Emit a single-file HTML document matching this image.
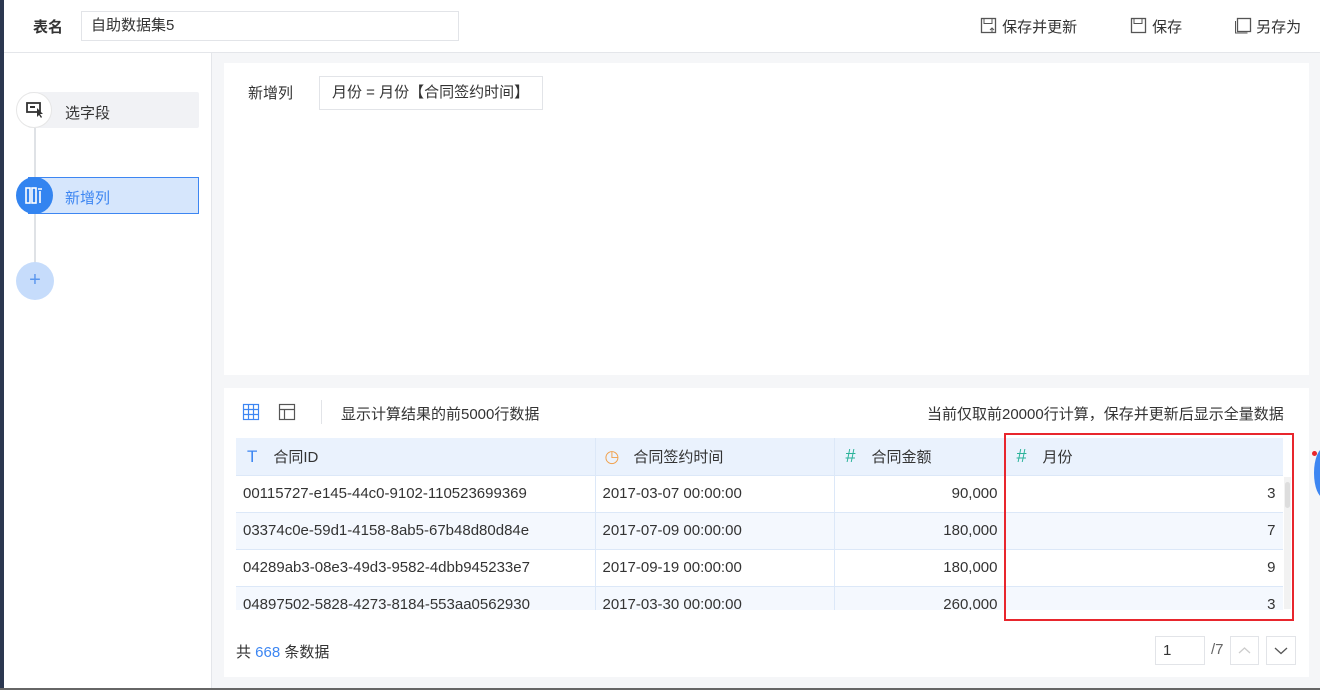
<html><head><style>
body{margin:0;width:1320px;height:690px;position:relative;overflow:hidden;background:#f5f6f8;font-family:"Liberation Sans","Noto Sans CJK SC",sans-serif;font-size:15px;color:#333}
.a{position:absolute}
td{border-right:1px solid #dce8f8;border-bottom:1px solid #dce8f8;padding:0 7px;height:37px;white-space:nowrap;overflow:hidden}
</style></head><body>
<div class="a" style="left:0;top:0;width:4px;height:690px;background:#2b3750"></div>
<div class="a" style="left:4px;top:0;width:1316px;height:52px;background:#fff;border-bottom:1px solid #e4e6ea"></div>
<div class="a" style="left:33px;top:16px;font-weight:bold;font-size:15px">表名</div>
<div class="a" style="left:81px;top:11px;border:1px solid #e2e4e8;line-height:28px;padding-left:9px;box-sizing:border-box;width:378px;height:30px">自助数据集5</div>
<div class="a" style="left:980px;top:16px">
<svg width="18" height="18" style="vertical-align:-3px"><rect x="1.5" y="1.5" width="14" height="14" fill="none" stroke="#555" stroke-width="1.3"/><rect x="4" y="1.5" width="8" height="5" fill="none" stroke="#555"/><path d="M12 16V11M10 13l2-2 2 2" stroke="#555" fill="none"/></svg> 保存并更新</div>
<div class="a" style="left:1130px;top:16px"><svg width="18" height="18" style="vertical-align:-3px"><rect x="1.5" y="1.5" width="14" height="14" fill="none" stroke="#555" stroke-width="1.3"/><rect x="4" y="1.5" width="8" height="5" fill="none" stroke="#555"/></svg> 保存</div>
<div class="a" style="left:1234px;top:16px"><svg width="18" height="18" style="vertical-align:-3px"><rect x="3.5" y="1.5" width="13" height="13" fill="none" stroke="#555" stroke-width="1.3"/><path d="M1.5 4v12h12" stroke="#555" fill="none"/></svg> 另存为</div>
<div class="a" style="left:4px;top:53px;width:207px;height:637px;background:#fff;border-right:1px solid #e4e6ea"></div>
<div class="a" style="left:34px;top:110px;width:2px;height:170px;background:#dfe2e6"></div>
<div class="a" style="left:28px;top:92px;width:171px;height:36px;background:#f1f2f5;border-radius:2px"></div>
<div class="a" style="left:16px;top:92px;width:36px;height:36px;border-radius:50%;background:#fff;border:1px solid #e6e6e6;box-sizing:border-box"><svg width="34" height="34"><rect x="10" y="10" width="13" height="9" fill="none" stroke="#333" stroke-width="1.8"/><rect x="13" y="13" width="5" height="2" fill="#333"/><path d="M20 15l0 9 2-2 2 3 1-1-2-3 3 0z" fill="#333"/></svg></div>
<div class="a" style="left:65px;top:102px">选字段</div>
<div class="a" style="left:28px;top:177px;width:169px;height:35px;background:#d6e6fc;border:1px solid #3d86f2"></div>
<div class="a" style="left:16px;top:177px;width:37px;height:37px;border-radius:50%;background:#3384f0"><svg width="37" height="37"><g fill="none" stroke="#fff" stroke-width="1.6"><rect x="10" y="11" width="4" height="15"/><rect x="16" y="11" width="4" height="15"/><path d="M24 14v12M22 12h4"/></g></svg></div>
<div class="a" style="left:65px;top:187px;color:#3d86f2">新增列</div>
<div class="a" style="left:16px;top:262px;width:38px;height:38px;border-radius:50%;background:#c6dcfb;color:#5b97ee;text-align:center;line-height:36px;font-size:20px">+</div>
<div class="a" style="left:224px;top:63px;width:1085px;height:312px;background:#fff"></div>
<div class="a" style="left:248px;top:82px">新增列</div>
<div class="a" style="left:319px;top:76px;width:224px;height:34px;border:1px solid #e2e4e8;box-sizing:border-box;line-height:32px;padding-left:12px">月份 = 月份【合同签约时间】</div>
<div class="a" style="left:224px;top:388px;width:1085px;height:289px;background:#fff"></div>
<svg class="a" style="left:242px;top:403px" width="18" height="18"><g fill="none" stroke="#3d86f2" stroke-width="1.2"><rect x="1.5" y="1.5" width="15" height="15"/><path d="M1.5 6.5h15M1.5 11.5h15M6.5 1.5v15M11.5 1.5v15"/></g></svg>
<svg class="a" style="left:278px;top:403px" width="18" height="18"><g fill="none" stroke="#555" stroke-width="1.2"><rect x="1.5" y="1.5" width="15" height="15"/><path d="M1.5 6.5h15M6.5 6.5v10"/></g></svg>
<div class="a" style="left:321px;top:400px;width:1px;height:24px;background:#e2e4e8"></div>
<div class="a" style="left:341px;top:403px">显示计算结果的前5000行数据</div>
<div class="a" style="left:927px;top:403px">当前仅取前20000行计算，保存并更新后显示全量数据</div>
<div class="a" style="left:236px;top:438px;width:1047px;height:172px;overflow:hidden">
<table style="border-collapse:collapse;table-layout:fixed;width:1047px;font-size:15px">
<colgroup><col style="width:359px"><col style="width:239px"><col style="width:171px"><col style="width:278px"></colgroup>
<tr style="background:#eaf2fd"><td><span style="color:#3d86f2;margin:0 16px 0 4px;font-size:17px">T</span>合同ID</td><td><span style="color:#f0a04b;margin:0 14px 0 2px;font-size:17px">◷</span>合同签约时间</td><td><span style="color:#2bb39a;margin:0 16px 0 4px;font-size:18px">#</span>合同金额</td><td><span style="color:#2bb39a;margin:0 16px 0 4px;font-size:18px">#</span>月份</td></tr>
<tr><td>00115727-e145-44c0-9102-110523699369</td><td>2017-03-07 00:00:00</td><td style="text-align:right">90,000</td><td style="text-align:right">3</td></tr>
<tr style="background:#f4f8fe"><td>03374c0e-59d1-4158-8ab5-67b48d80d84e</td><td>2017-07-09 00:00:00</td><td style="text-align:right">180,000</td><td style="text-align:right">7</td></tr>
<tr><td>04289ab3-08e3-49d3-9582-4dbb945233e7</td><td>2017-09-19 00:00:00</td><td style="text-align:right">180,000</td><td style="text-align:right">9</td></tr>
<tr style="background:#f4f8fe"><td>04897502-5828-4273-8184-553aa0562930</td><td>2017-03-30 00:00:00</td><td style="text-align:right">260,000</td><td style="text-align:right">3</td></tr>
</table></div>
<div class="a" style="left:1284px;top:477px;width:7px;height:132px;background:#f2f2f2"></div>
<div class="a" style="left:1285px;top:482px;width:5px;height:26px;background:#ddd;border-radius:3px"></div>
<div class="a" style="left:1004px;top:433px;width:286px;height:184px;border:2px solid #e8262d"></div>
<div class="a" style="left:1314px;top:448px;width:20px;height:50px;border-radius:50%;background:#3d86f2"></div>
<div class="a" style="left:1312px;top:451px;width:5px;height:5px;border-radius:50%;background:#e8262d"></div>
<div class="a" style="left:236px;top:641px">共 <span style="color:#3d86f2">668</span> 条数据</div>
<div class="a" style="left:1155px;top:636px;width:50px;height:29px;border:1px solid #e2e4e8;box-sizing:border-box;line-height:27px;padding-left:7px">1</div>
<div class="a" style="left:1211px;top:641px;color:#666">/7</div>
<div class="a" style="left:1230px;top:636px;width:29px;height:29px;border:1px solid #e2e4e8;box-sizing:border-box"><svg width="27" height="27"><path d="M8 16l5.5-5 5.5 5" stroke="#ccc" fill="none" stroke-width="1.3"/></svg></div>
<div class="a" style="left:1266px;top:636px;width:30px;height:29px;border:1px solid #e2e4e8;box-sizing:border-box"><svg width="28" height="27"><path d="M8 11l6 5.5 6-5.5" stroke="#555" fill="none" stroke-width="1.3"/></svg></div>
<div class="a" style="left:0;top:688px;width:1320px;height:2px;background:#666"></div>
</body></html>
